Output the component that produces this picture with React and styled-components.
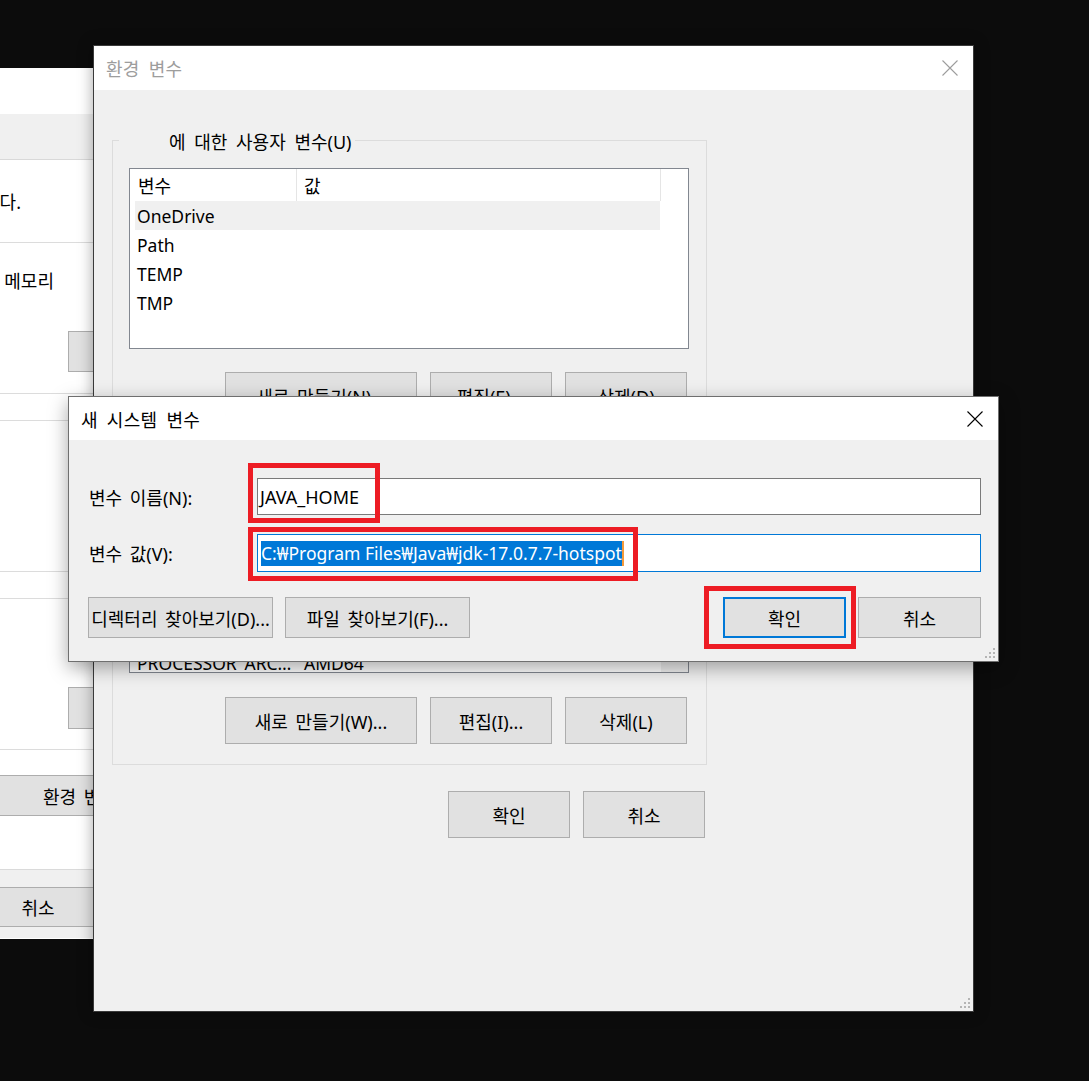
import styled, { createGlobalStyle, css } from "styled-components";

const GlobalStyle = createGlobalStyle`
  html, body {
    margin: 0;
    padding: 0;
    background: #0c0c0c;
  }
  body {
    font-family: "Noto Sans", "Noto Sans CJK KR", sans-serif;
    font-size: 17.5px;
    color: #000;
  }
`;

// Hangul in the original (Malgun Gothic) runs a little wider, with wide spaces
const korean = css`
  font-size: 18px;
  word-spacing: 3px;
`;

const Desktop = styled.div`
  position: relative;
  width: 1089px;
  height: 1081px;
  overflow: hidden;
  background: #0c0c0c;
`;

// windows sit on the desktop at their own coordinates
const Window = styled.div`
  position: absolute;
  left: ${(p) => p.$x}px;
  top: ${(p) => p.$y}px;
  width: ${(p) => p.$w}px;
  height: ${(p) => p.$h}px;
  box-sizing: border-box;
  display: flex;
  flex-direction: column;
  background: ${(p) => p.$bg || "#f0f0f0"};
  border: 1px solid ${(p) => p.$border || "transparent"};
  box-shadow: ${(p) => p.$shadow || "none"};
  overflow: hidden;
`;

const TitleBar = styled.div`
  ${korean}
  word-spacing: 4px;
  letter-spacing: 0.3px;
  flex: none;
  height: ${(p) => p.$h}px;
  background: #fff;
  display: flex;
  align-items: center;
  justify-content: space-between;
  padding: 0 15px 0 12px;
  color: ${(p) => (p.$inactive ? "#9d9d9d" : "#000")};
`;

const Button = styled.button`
  ${korean}
  flex: none;
  box-sizing: border-box;
  width: ${(p) => p.$w}px;
  height: ${(p) => p.$h || 47}px;
  background: #e1e1e1;
  border: ${(p) => (p.$default ? "2px solid #0078d7" : "1px solid #adadad")};
  font-family: inherit;
  color: #000;
  padding: 0;
  white-space: nowrap;
  margin-left: ${(p) => (p.$push ? "auto" : "0")};
`;

/* ---------- back window (시스템 속성) ---------- */

const TabStrip = styled.div`
  flex: none;
  height: 45px;
  background: #f0f0f0;
`;

const TabPage = styled.div`
  flex: none;
  height: 709px;
  background: #fff;
  border-top: 1px solid #d9d9d9;
  border-bottom: 1px solid #dadada;
  display: flex;
  flex-direction: column;
  padding-left: 40px;
`;

const Notice = styled.div`
  ${korean}
  height: 82px;
  width: ${(p) => p.$end}px;
  display: flex;
  align-items: center;
  justify-content: flex-end;
  white-space: nowrap;
`;

const SysGroup = styled.div`
  box-sizing: border-box;
  width: 500px;
  height: 152px;
  margin-top: ${(p) => p.$mt || 0}px;
  border: 1px solid #dcdcdc;
  padding-top: 26px;
  display: flex;
  flex-direction: column;
`;

const GroupText = styled.div`
  ${korean}
  height: 24px;
  line-height: 24px;
  width: ${(p) => p.$end}px;
  display: flex;
  justify-content: flex-end;
  white-space: nowrap;
`;

const GroupButtonRow = styled.div`
  margin-top: 38px;
  padding-left: 366px;
  display: flex;
`;

const EnvButtonRow = styled.div`
  margin-top: 25px;
  padding-left: 280px;
  display: flex;
`;

const SysFooter = styled.div`
  flex: 1;
  background: #f0f0f0;
  display: flex;
  gap: 12px;
  padding: 17px 0 0 182px;
`;

/* ---------- 환경 변수 window ---------- */

const EnvBody = styled.div`
  position: relative;
  flex: 1;
  padding: 50px 0 0 18px;
  display: flex;
  flex-direction: column;
`;

const GroupBox = styled.div`
  position: relative;
  box-sizing: border-box;
  width: 595px;
  margin-top: ${(p) => p.$mt || 0}px;
  border: 1px solid #dcdcdc;
  padding: ${(p) => p.$pt}px 17px ${(p) => p.$pb}px 16px;
`;

const GroupLabel = styled.div`
  ${korean}
  word-spacing: 4px;
  position: absolute;
  top: -11px;
  left: 6px;
  padding: 0 4px 0 50px;
  line-height: 24px;
  background: #f0f0f0;
  white-space: nowrap;
`;

const ListView = styled.div`
  box-sizing: border-box;
  width: 560px;
  height: ${(p) => p.$h}px;
  border: 1px solid #828790;
  background: #fff;
  display: flex;
  overflow: hidden;
`;

const ListColumn = styled.div`
  flex: 1;
  display: flex;
  flex-direction: column;
  min-width: 0;
`;

const HeaderRow = styled.div`
  flex: none;
  height: ${(p) => p.$h}px;
  display: flex;
`;

const HeaderCell = styled.div`
  ${korean}
  box-sizing: border-box;
  width: ${(p) => p.$w}px;
  padding-left: ${(p) => p.$pl}px;
  border-right: 1px solid #e5e5e5;
  display: flex;
  align-items: center;
`;

const Row = styled.div`
  flex: none;
  margin-left: 5px;
  width: 525px;
  height: 29px;
  display: flex;
  align-items: center;
  background: ${(p) => (p.$selected ? "#f0f0f0" : "transparent")};
`;

const Cell = styled.div`
  box-sizing: border-box;
  width: ${(p) => p.$w}px;
  padding-left: ${(p) => p.$pl}px;
  white-space: nowrap;
  overflow: hidden;
  text-overflow: ellipsis;
`;

const ScrollBar = styled.div`
  flex: none;
  width: 27px;
  margin-left: 1px;
  background: #f0f0f0;
  display: flex;
  flex-direction: column;
  justify-content: flex-end;
`;

const ScrollArrow = styled.div`
  height: 26px;
  display: flex;
  align-items: center;
  justify-content: center;
`;

const ButtonRow = styled.div`
  display: flex;
  justify-content: flex-end;
  gap: 13px;
  margin-top: ${(p) => p.$mt}px;
  padding-right: 2px;
`;

const Footer = styled.div`
  width: 595px;
  display: flex;
  justify-content: flex-end;
  gap: 13px;
  margin-top: 26px;
  padding-right: 2px;
  box-sizing: border-box;
`;

const Grip = styled.svg`
  position: absolute;
  right: 2px;
  bottom: 2px;
`;

/* ---------- 새 시스템 변수 dialog ---------- */

const DialogBody = styled.div`
  flex: 1;
  padding: 38px 17px 0 20px;
  display: flex;
  flex-direction: column;
`;

const FieldGrid = styled.div`
  display: grid;
  grid-template-columns: 168px 1fr;
  row-gap: 19px;
  align-items: center;
`;

const FieldLabel = styled.div`
  ${korean}
  white-space: nowrap;
`;

const Field = styled.div`
  box-sizing: border-box;
  height: ${(p) => p.$h}px;
  background: #fff;
  border: 1px solid ${(p) => (p.$focused ? "#0078d7" : "#7a7a7a")};
  display: flex;
  align-items: center;
  padding-left: ${(p) => (p.$focused ? 3 : 2)}px;
  font-size: ${(p) => (p.$focused ? 17.5 : 18)}px;
  white-space: nowrap;
`;

const Selection = styled.span`
  background: #0078d7;
  color: #fff;
  line-height: 25px;
  border-right: 2px solid #f59a3a;
`;

const DialogButtons = styled.div`
  display: flex;
  gap: 12px;
  margin: 25px 0 0 -1px;
`;

const Marker = styled.div`
  position: absolute;
  left: ${(p) => p.$x}px;
  top: ${(p) => p.$y}px;
  width: ${(p) => p.$w}px;
  height: ${(p) => p.$h}px;
  box-sizing: border-box;
  border: 5px solid #ed1c24;
  pointer-events: none;
`;

const CloseIcon = ({ color }) => (
  <svg width="16" height="16" viewBox="0 0 16 16">
    <path d="M0.5 0.5 L15.5 15.5 M15.5 0.5 L0.5 15.5" stroke={color} strokeWidth="1.1" fill="none" />
  </svg>
);

const ResizeGrip = () => (
  <Grip width="12" height="12" viewBox="0 0 12 12">
    <g fill="#b5b5b5">
      <rect x="9" y="1" width="2" height="2" />
      <rect x="9" y="5" width="2" height="2" />
      <rect x="5" y="5" width="2" height="2" />
      <rect x="9" y="9" width="2" height="2" />
      <rect x="5" y="9" width="2" height="2" />
      <rect x="1" y="9" width="2" height="2" />
    </g>
  </Grip>
);

const userVars = [
  { name: "OneDrive", value: "" },
  { name: "Path", value: "" },
  { name: "TEMP", value: "" },
  { name: "TMP", value: "" },
];

const systemVars = [
  { name: "ComSpec", value: "C:₩WINDOWS₩system32₩cmd.exe" },
  { name: "DriverData", value: "C:₩Windows₩System32₩Drivers₩DriverData" },
  { name: "NUMBER_OF_PROCESSORS", value: "8" },
  { name: "OS", value: "Windows_NT" },
  { name: "PROCESSOR_ARCHITECTURE", value: "AMD64" },
];

const VarList = ({ rows, height, headerHeight = 32, scroll }) => (
  <ListView $h={height}>
    <ListColumn>
      <HeaderRow $h={headerHeight}>
        <HeaderCell $w={167} $pl={8}>변수</HeaderCell>
        <HeaderCell $w={364} $pl={7}>값</HeaderCell>
      </HeaderRow>
      {rows.map((r, i) => (
        <Row key={r.name} $selected={i === 0 && !scroll}>
          <Cell $w={161} $pl={2}>{r.name}</Cell>
          <Cell $w={364} $pl={8}>{r.value}</Cell>
        </Row>
      ))}
    </ListColumn>
    {scroll && (
      <ScrollBar>
        <ScrollArrow>
          <svg width="9" height="6" viewBox="0 0 9 6">
            <path d="M0.5 0.5 L4.5 4.5 L8.5 0.5" stroke="#606060" fill="none" />
          </svg>
        </ScrollArrow>
      </ScrollBar>
    )}
  </ListView>
);

const App = () => {
  return (
    <>
      <GlobalStyle />
      <Desktop>
        {/* 시스템 속성 - mostly hidden behind */}
        <Window $x={-340} $y={68} $w={580} $h={871} $bg="#fff">
          <TitleBar $h={45}>시스템 속성</TitleBar>
          <TabStrip />
          <TabPage>
            <Notice $end={320}>이 내용을 변경하려면 관리자로 로그온해야 합니다.</Notice>
            <SysGroup>
              <GroupText $end={352}>시각 효과, 프로세서 일정, 메모리 사용 및 가상 메모리</GroupText>
              <GroupButtonRow>
                <Button $w={122} $h={41}>설정(S)...</Button>
              </GroupButtonRow>
            </SysGroup>
            <SysGroup $mt={26}>
              <GroupText $end={250}>로그인에 관련된 바탕 화면 설정</GroupText>
              <GroupButtonRow>
                <Button $w={122} $h={40}>설정(E)...</Button>
              </GroupButtonRow>
            </SysGroup>
            <SysGroup $mt={26}>
              <GroupText $end={250}>시스템 시작, 시스템 오류 및 디버깅 정보</GroupText>
              <GroupButtonRow>
                <Button $w={122} $h={42}>설정(T)...</Button>
              </GroupButtonRow>
            </SysGroup>
            <EnvButtonRow>
              <Button $w={237} $h={41}>환경 변수(N)...</Button>
            </EnvButtonRow>
          </TabPage>
          <SysFooter>
            <Button $w={122} $h={40}>확인</Button>
            <Button $w={122} $h={40}>취소</Button>
            <Button $w={122} $h={40}>적용(A)</Button>
          </SysFooter>
        </Window>

        {/* 환경 변수 */}
        <Window
          $x={93}
          $y={45}
          $w={881}
          $h={967}
          $border="#3a3a3a"
          $shadow="0 0 14px rgba(0,0,0,0.35)"
        >
          <TitleBar $h={44} $inactive>
            환경 변수
            <CloseIcon color="#9d9d9d" />
          </TitleBar>
          <EnvBody>
            <GroupBox $pt={27} $pb={17}>
              <GroupLabel>에 대한 사용자 변수(U)</GroupLabel>
              <VarList rows={userVars} height={181} />
              <ButtonRow $mt={23}>
                <Button $w={192}>새로 만들기(N)...</Button>
                <Button $w={122}>편집(E)...</Button>
                <Button $w={122}>삭제(D)</Button>
              </ButtonRow>
            </GroupBox>
            <GroupBox $mt={18} $pt={41} $pb={20}>
              <GroupLabel>시스템 변수(S)</GroupLabel>
              <VarList rows={systemVars} height={176} headerHeight={34} scroll />
              <ButtonRow $mt={24}>
                <Button $w={192}>새로 만들기(W)...</Button>
                <Button $w={122}>편집(I)...</Button>
                <Button $w={122}>삭제(L)</Button>
              </ButtonRow>
            </GroupBox>
            <Footer>
              <Button $w={122}>확인</Button>
              <Button $w={122}>취소</Button>
            </Footer>
            <ResizeGrip />
          </EnvBody>
        </Window>

        {/* 새 시스템 변수 */}
        <Window
          $x={68}
          $y={396}
          $w={931}
          $h={266}
          $border="#6f6f6f"
          $shadow="0 6px 18px rgba(0,0,0,0.35)"
        >
          <TitleBar $h={43}>
            새 시스템 변수
            <CloseIcon color="#000" />
          </TitleBar>
          <DialogBody>
            <FieldGrid>
              <FieldLabel>변수 이름(N):</FieldLabel>
              <Field $h={37}>JAVA_HOME</Field>
              <FieldLabel>변수 값(V):</FieldLabel>
              <Field $h={38} $focused>
                <Selection>C:₩Program Files₩Java₩jdk-17.0.7.7-hotspot</Selection>
              </Field>
            </FieldGrid>
            <DialogButtons>
              <Button $w={185} $h={41}>디렉터리 찾아보기(D)...</Button>
              <Button $w={185} $h={41}>파일 찾아보기(F)...</Button>
              <Button $w={123} $h={41} $push $default>확인</Button>
              <Button $w={123} $h={41}>취소</Button>
            </DialogButtons>
          </DialogBody>
          <ResizeGrip />
          <Marker $x={179} $y={66} $w={132} $h={60} />
          <Marker $x={179} $y={130} $w={390} $h={54} />
          <Marker $x={635} $y={189} $w={152} $h={63} />
        </Window>
      </Desktop>
    </>
  );
};

export default App;
